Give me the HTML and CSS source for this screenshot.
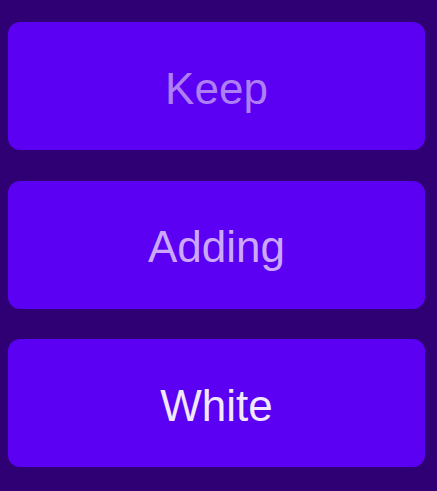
FILE: index.html
```html
<!DOCTYPE html>
<html>
<head>
<meta charset="utf-8">
<link rel="stylesheet" href="styles.css">
</head>
<body>
<div class="list">
  <div class="btn keep"><span class="label">Keep</span></div>
  <div class="btn adding"><span class="label">Adding</span></div>
  <div class="btn white"><span class="label">White</span></div>
</div>
</body>
</html>
```
FILE: styles.css
```css
html, body {
  margin: 0;
  padding: 0;
  background: #2f0073;
  height: 100%;
}
.list {
  padding: 22px 12px 0 8px;
  display: flex;
  flex-direction: column;
  gap: 30.5px;
}
.btn {
  box-sizing: border-box;
  height: 128px;
  padding-top: 5px;
  background: #5b00f2;
  border-radius: 12px;
  display: flex;
  align-items: center;
  justify-content: center;
  font-family: "Liberation Sans", Arial, sans-serif;
  font-size: 44px;
}
.keep { color: #ae7ef4; }
.adding { color: #cba8fb; }
.white { color: #f1e8ff; }
```
